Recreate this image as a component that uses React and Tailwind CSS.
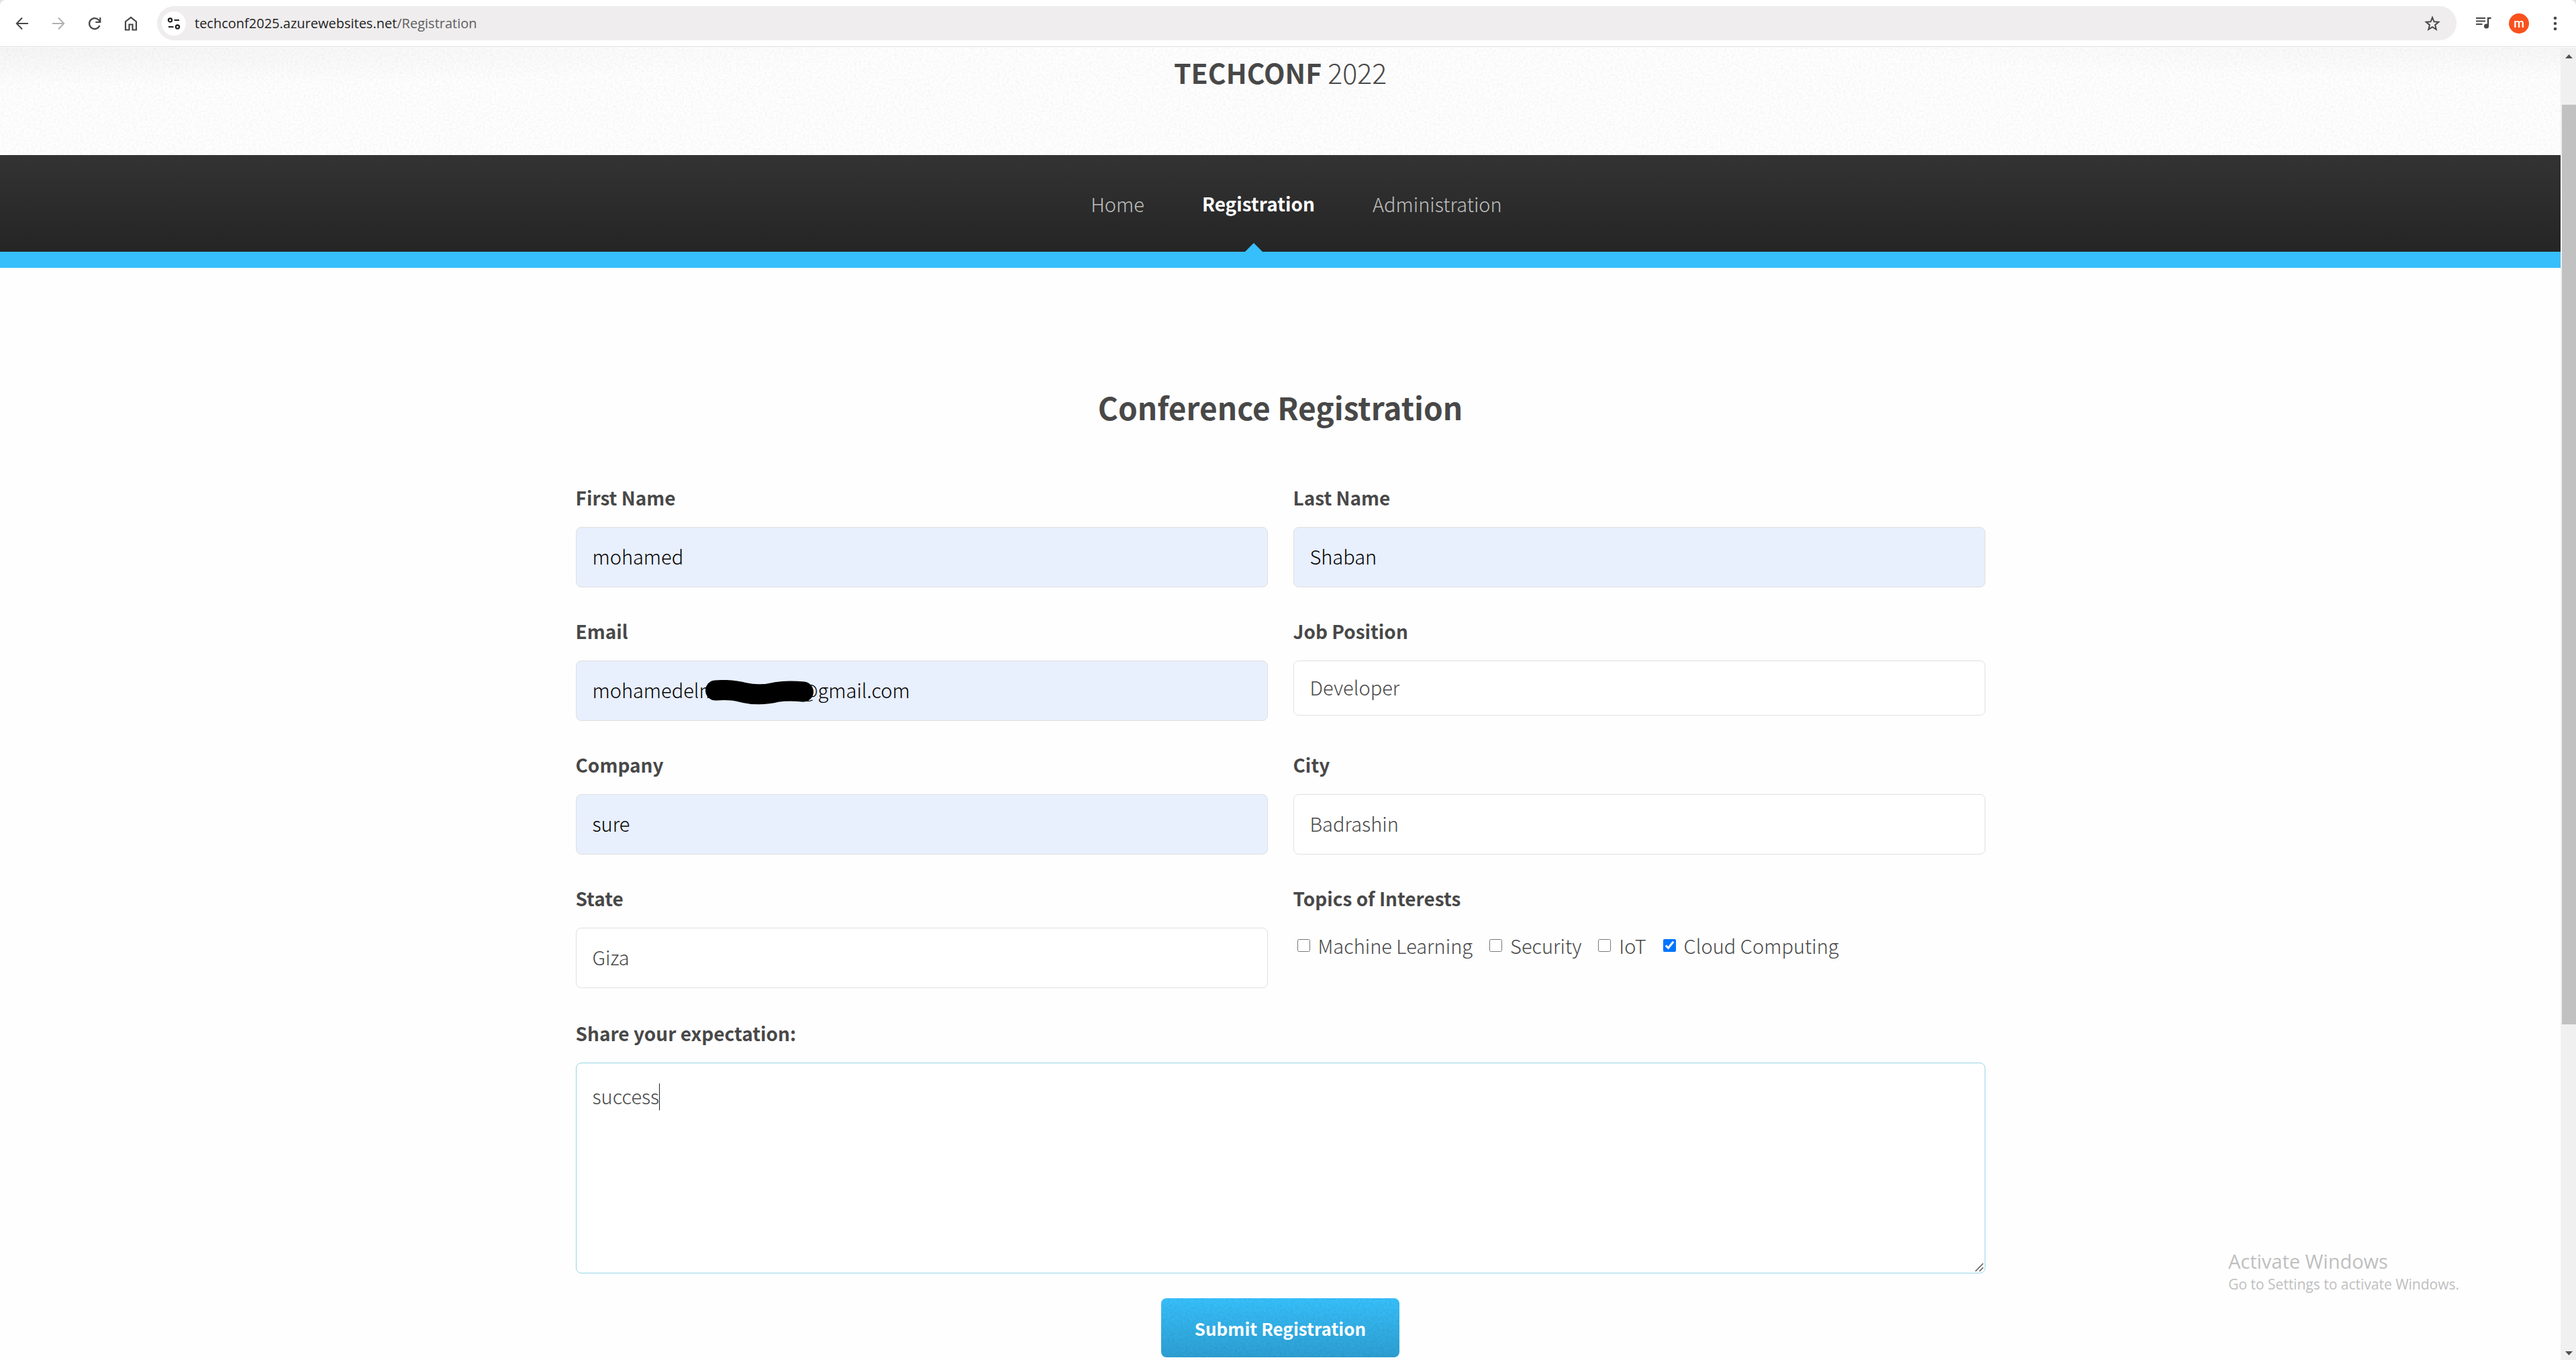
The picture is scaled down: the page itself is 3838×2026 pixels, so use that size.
import React from "react";

const bodyFont = "font-['Noto_Sans_CJK_SC','Noto_Sans',sans-serif]";
const uiFont = "font-['Open_Sans','Noto_Sans',sans-serif]";

function Grain({ id, opacity, className = "" }) {
  return (
    <svg
      aria-hidden="true"
      className={`pointer-events-none absolute inset-0 h-full w-full ${className}`}
    >
      <filter id={id} x="0" y="0" width="100%" height="100%">
        <feTurbulence type="fractalNoise" baseFrequency="0.3" numOctaves="2" seed="4" />
        <feColorMatrix values="0 0 0 0 0  0 0 0 0 0  0 0 0 0 0  1.6 0 0 0 -0.55" />
      </filter>
      <rect width="100%" height="100%" filter={`url(#${id})`} opacity={opacity} />
    </svg>
  );
}

function IconButton({ label, children, className = "" }) {
  return (
    <button
      type="button"
      aria-label={label}
      className={`flex size-6 items-center justify-center ${className}`}
    >
      {children}
    </button>
  );
}

function BrowserBar() {
  return (
    <div className="bg-[#dedede]">
      <div
        className={`flex h-[70px] items-center rounded-t-lg border-b border-[#dedede] bg-white text-[#474747] ${uiFont}`}
      >
        <div className="flex items-center gap-[30px] pl-[21px] pr-[27px]">
          <IconButton label="Back">
            <svg viewBox="0 0 24 24" className="size-6" fill="none" stroke="currentColor" strokeWidth="2">
              <path d="M21 12H4.5M12 3.5 3.8 12l8.200 8.500" />
            </svg>
          </IconButton>
          <IconButton label="Forward" className="text-[#b0b0b0]">
            <svg viewBox="0 0 24 24" className="size-6" fill="none" stroke="currentColor" strokeWidth="2">
              <path d="M3 12h16.500M12 3.500l8.200 8.500-8.200 8.500" />
            </svg>
          </IconButton>
          <IconButton label="Reload">
            <svg viewBox="0 0 24 24" className="size-6" fill="none" stroke="currentColor" strokeWidth="2.200">
              <path d="M19.500 15A8 8 0 1 1 18 6.700l2 2.300" />
              <path d="M20.300 3v7h-7" />
            </svg>
          </IconButton>
          <IconButton label="Home">
            <svg viewBox="0 0 24 24" className="size-6" fill="none" stroke="currentColor" strokeWidth="2.200">
              <path d="M4 21.500V9.200L12 3l8 6.200v12.300h-5.500v-8h-5v8z" />
            </svg>
          </IconButton>
        </div>
        <div className="flex h-[51px] min-w-0 flex-1 items-center rounded-full bg-[#efedee] pl-[7px] pr-6">
          <button
            type="button"
            aria-label="View site information"
            className="flex size-9 shrink-0 items-center justify-center rounded-full bg-white text-[#1f1f1f]"
          >
            <svg viewBox="0 0 20 20" className="size-5" fill="none" stroke="currentColor" strokeWidth="2.200">
              <circle cx="4.500" cy="5" r="2.600" />
              <path d="M10.500 5H18M2 15h7.500" />
              <circle cx="15.500" cy="15" r="2.600" />
            </svg>
          </button>
          <a href="#" className="ml-[13px] flex-1 truncate text-[20px] leading-7 text-[#1f1f1f]">
            techconf2025.azurewebsites.net<span className="text-[#5e5e5e]">/Registration</span>
          </a>
          <IconButton label="Bookmark this tab">
            <svg viewBox="0 0 24 24" className="size-6" fill="none" stroke="currentColor" strokeWidth="2">
              <path d="m12 3 2.500 6.300 6.800.500-5.200 4.400 1.600 6.600L12 17.200l-5.700 3.600 1.600-6.600-5.200-4.400 6.800-.500z" />
            </svg>
          </IconButton>
        </div>
        <div className="flex items-center pl-7 pr-[19px]">
          <IconButton label="Media controls">
            <svg viewBox="0 0 24 24" className="size-6" fill="none" stroke="currentColor" strokeWidth="2">
              <path d="M1 4h14M1 8.500h14M1 13h9.500" />
              <path d="M19 16V4h4.500" strokeWidth="2.400" />
              <circle cx="16.500" cy="16" r="3.600" fill="currentColor" stroke="none" />
            </svg>
          </IconButton>
          <button
            type="button"
            aria-label="Profile"
            className="ml-[26px] mr-[27px] flex size-[30px] items-center justify-center rounded-full bg-[#f9511e] font-['Roboto',sans-serif] text-[18px] font-medium leading-none text-white"
          >
            m
          </button>
          <button type="button" aria-label="Menu" className="flex w-6 items-center justify-center">
            <svg viewBox="0 0 24 24" className="size-6" fill="currentColor">
              <circle cx="12" cy="4" r="2.300" />
              <circle cx="12" cy="12" r="2.300" />
              <circle cx="12" cy="20" r="2.300" />
            </svg>
          </button>
        </div>
      </div>
    </div>
  );
}

function Header() {
  return (
    <header className="relative mt-px bg-[#fefefe] bg-[radial-gradient(ellipse_at_top_left,#f5f5f5_0%,transparent_25%),radial-gradient(ellipse_at_top_right,#f7f7f7_0%,transparent_20%)] pb-[92px] pt-1 text-center">
      <Grain id="grain-header" opacity="0.04" />
      <h1 className="relative text-[41px] font-light leading-[64px]">
        <a href="#">
          <span className="font-bold">TECHCONF</span> 2022
        </a>
      </h1>
    </header>
  );
}

function Nav() {
  return (
    <nav className="relative border-b-[24px] border-[#37bffb] bg-linear-to-b from-[#333333] to-[#252525]">
      <ul className="flex h-36 items-center justify-center gap-[86px] pl-12 text-[29px] font-light leading-10 text-[#bfbfbf]">
        <li><a href="#">Home</a></li>
        <li className="relative flex h-full items-center justify-center">
          <a href="#" aria-current="page" className="text-[28px] font-bold text-white">Registration</a>
          <svg
            viewBox="0 0 26 13"
            aria-hidden="true"
            className="absolute bottom-0 left-16 h-[13px] w-[26px]"
            fill="#37bffb"
          >
            <path d="M0 13 13 0l13 13z" />
          </svg>
        </li>
        <li><a href="#">Administration</a></li>
      </ul>
    </nav>
  );
}

function Field({ id, label, value, type = "text", filled = false, short = false, children }) {
  return (
    <div>
      <label htmlFor={id} className="block text-[28px] font-bold leading-10">{label}</label>
      <div className="relative mt-6 h-[90px]">
        <input
          id={id}
          type={type}
          defaultValue={value}
          className={`block w-full rounded-lg border border-[#e0e0e0] px-6 pb-1 text-[29px] font-light ${
            short ? "h-[82px]" : "h-[90px]"
          } ${filled ? "bg-[#e8effd] text-black" : "bg-white text-[#474747]"}`}
        />
        {children}
      </div>
    </div>
  );
}

const topics = ["Machine Learning", "Security", "IoT", "Cloud Computing"];

function Topics() {
  return (
    <fieldset>
      <legend className="block text-[28px] font-bold leading-10">Topics of Interests</legend>
      <div className="mt-[30px] flex items-center gap-[25px] pl-1.5 text-[29px] font-light leading-10">
        {topics.map((topic) => (
          <label key={topic} className="flex items-center gap-3">
            <input type="checkbox" defaultChecked={topic === "Cloud Computing"} className="size-[19px] accent-[#0075ff]" />
            {topic}
          </label>
        ))}
      </div>
    </fieldset>
  );
}

function RegistrationForm() {
  return (
    <form className="mx-auto w-full max-w-[2100px]">
      <div className="grid grid-cols-2 gap-x-[38px] gap-y-[45px]">
        <Field id="first" label="First Name" value="mohamed" filled />
        <Field id="last" label="Last Name" value="Shaban" filled />
        <Field id="email" label="Email" value="mohamedelmxxxxxx00x@gmail.com" type="email" filled>
          <svg viewBox="0 0 162 38" aria-hidden="true" className="absolute left-[193px] top-[29px] h-[38px] w-[162px]">
            <path d="M15 15.500C32 14 44 15 58 19c18 4 32 3 48-1 12-2 24-2 40-.500" fill="none" stroke="#000" strokeWidth="30" strokeLinecap="round" />
          </svg>
        </Field>
        <Field id="job" label="Job Position" value="Developer" short />
        <Field id="company" label="Company" value="sure" filled />
        <Field id="city" label="City" value="Badrashin" />
        <Field id="state" label="State" value="Giza" />
        <Topics />
      </div>
      <label htmlFor="expectation" className="mt-[47px] block text-[28px] font-bold leading-10">
        Share your expectation:
      </label>
      <div className="relative mt-6">
        <textarea
          id="expectation"
          defaultValue="success"
          className="block h-[314px] w-full resize-none rounded-lg border border-[#98d4e8] bg-white px-6 py-7 text-[29px] font-light leading-10"
        />
        <span aria-hidden="true" className="absolute left-[124px] top-[31px] h-10 w-px bg-[#202020]" />
        <svg viewBox="0 0 12 12" aria-hidden="true" className="absolute bottom-[3px] right-[3px] size-3" stroke="#555" strokeWidth="1.500">
          <path d="M0 12 12 0M6 12l6-6" />
        </svg>
      </div>
      <div className="mt-[37px] flex justify-center">
        <button
          type="submit"
          className="relative h-[88px] overflow-hidden rounded-lg bg-linear-to-b from-[#37c0fb] to-[#2d9fd3] px-[50px] text-[26px] font-bold text-white"
        >
          <Grain id="grain-button" opacity="0.07" />
          <span className="relative">Submit Registration</span>
        </button>
      </div>
    </form>
  );
}

function Scrollbar() {
  return (
    <div aria-hidden="true" className="mt-px flex w-[23px] shrink-0 flex-col items-center bg-[#f0f0f0] pl-0.5">
      <svg viewBox="0 0 21 23" className="h-[23px] w-full" fill="#505050">
        <path d="M5 16 10.500 10 16 16z" />
      </svg>
      <div className="flex-[62]" />
      <div className="w-full flex-[1370] bg-[#c1c1c1]" />
      <div className="flex-[477]" />
      <svg viewBox="0 0 21 23" className="h-[23px] w-full" fill="#505050">
        <path d="M5 10 10.500 16 16 10z" />
      </svg>
    </div>
  );
}

export default function App() {
  return (
    <div className="relative flex min-h-screen flex-col bg-white">
      <BrowserBar />
      <div className="flex flex-1">
        <main className={`min-w-0 flex-1 bg-[#fefefe] text-[#484848] ${bodyFont}`}>
          <Header />
          <Nav />
          <section className="pt-[172px]">
            <h2 className="mb-20 text-center text-[46px] font-bold leading-[70px]">Conference Registration</h2>
            <RegistrationForm />
          </section>
        </main>
        <Scrollbar />
      </div>
      <div className={`pointer-events-none absolute bottom-[99px] right-[174px] text-[#bfbfbf] ${uiFont}`}>
        <p className="text-[29px] leading-10">Activate Windows</p>
        <p className="text-[21px] leading-7">Go to Settings to activate Windows.</p>
      </div>
    </div>
  );
}
